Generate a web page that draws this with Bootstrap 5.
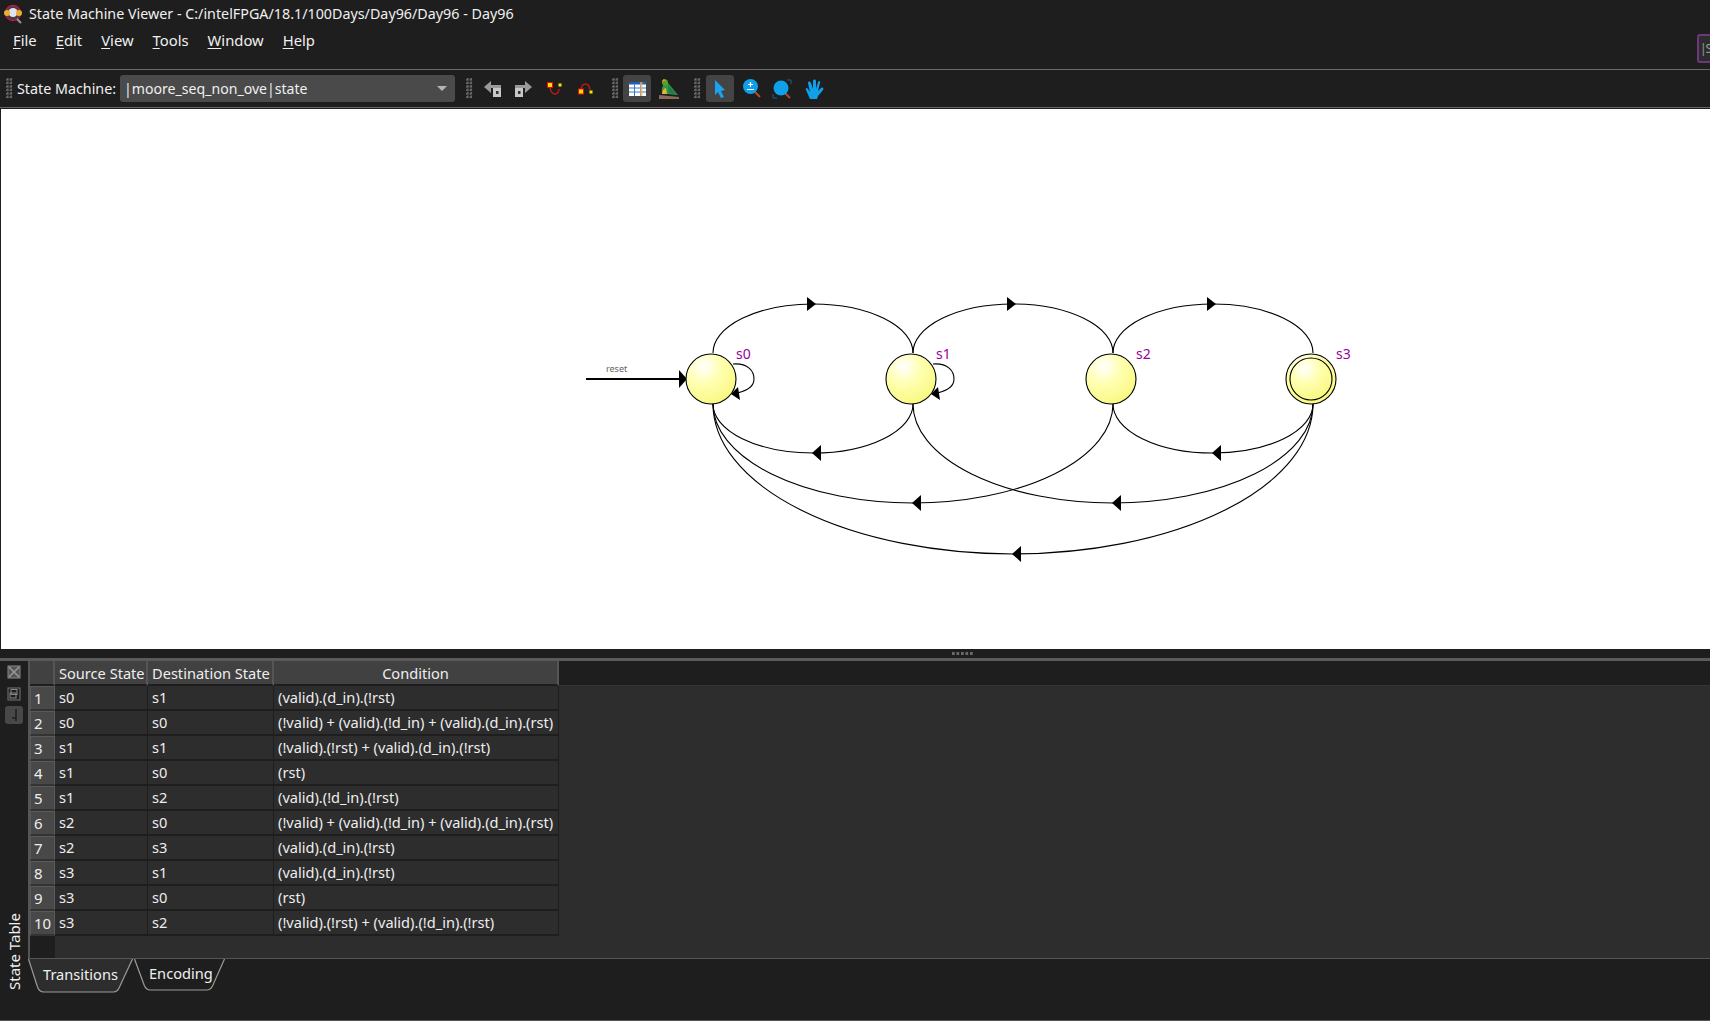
<!DOCTYPE html>
<html lang="en">
  <head>
    <meta charset="UTF-8" />
    <title>State Machine Viewer</title>
    <link href="https://cdn.jsdelivr.net/npm/bootstrap@5.3.0/dist/css/bootstrap.min.css" rel="stylesheet" />
    <style>
      html, body { height: 100%; overflow: hidden; }
      body { background: #1e1e1e; color: #f0f0f0; font-family: "Noto Sans", "Open Sans", sans-serif; font-size: 14.6px; }
      .app-shell { height: 1021px; width: 1710px; }
      .title-bar { height: 28px; padding-left: 3px; gap: 6px; font-size: 14.3px; }
      .menu-bar { height: 42px; padding-left: 13px; gap: 19px; padding-bottom: 16px; border-bottom: 1px solid #6a6a6a; position: relative; font-size: 14.8px; }
      .menu-bar u { text-underline-offset: 2px; }
      .side-tool { width: 13px; height: 29px; border: 2px solid #70357f; border-right: 0; border-radius: 3px 0 0 3px; background: #2c2c2c; color: #9a9a9a; overflow: hidden; line-height: 25px; font-size: 12px; letter-spacing: -1px; padding-left: 1px; position: absolute; right: 0; top: 6px; }
      .tool-bar { height: 38px; border-bottom: 1px solid #666; padding-left: 6px; font-size: 14.3px; }
      .grip { width: 7px; height: 21px; background-image: radial-gradient(circle at 1.5px 1.5px, #666 1.3px, transparent 1.4px); background-size: 3.5px 3.5px; }
      .combo-box { width: 335px; height: 27px; background: #4a4a4a; border-radius: 3px; padding: 0 8px 0 4px; margin-left: 4px; font-size: 14.1px; }
      .combo-caret { width: 0; height: 0; border-left: 5px solid transparent; border-right: 5px solid transparent; border-top: 5px solid #b5b5b5; }
      .tool-slot { width: 28px; height: 27px; border-radius: 3px; }
      .tool-on { background: #444; }
      .draw-area { height: 540px; background: #fff; margin: 1px 0 0 1px; }
      .draw-area svg { display: block; }
      .state-label { font-size: 14px; fill: #990099; font-family: "Noto Sans", sans-serif; }
      .reset-label { font-size: 9px; fill: #666; font-family: "Noto Sans", sans-serif; }
      .split-handle { height: 9px; padding-left: 952px; }
      .split-dots { width: 22px; height: 3px; background-image: linear-gradient(90deg, #6a6a6a 3px, transparent 1px); background-size: 4.5px 3px; margin-top: 3px; }
      .lower-dock { height: 363px; border-top: 3px solid #5a5a5a; border-bottom: 1px solid #555; }
      .dock-strip { width: 28px; }
      .dock-btn { width: 17px; height: 17px; }
      .dock-btn-on { width: 18px; height: 18px; background: #484848; border-radius: 3px; }
      .dock-name { writing-mode: vertical-rl; transform: rotate(180deg); height: 80px; margin-top: auto; margin-bottom: 30px; line-height: 1; font-size: 15px; }
      .table-pane { height: 297px; background: #2d2d2d; border-left: 2px solid #555; overflow: hidden; }
      .trans-table { table-layout: fixed; width: 1680px; margin: 0; --bs-table-bg: #2d2d2d; --bs-table-color: #eee; border-collapse: separate; border-spacing: 0; }
      .trans-table th, .trans-table td { padding: 0 4px; height: 25px; font-weight: 400; font-size: 14.6px; line-height: 22px; vertical-align: middle; white-space: nowrap; color: #eee; background: #2d2d2d; box-shadow: none; border-bottom: 2px solid #1e1e1e; border-right: 1px solid #1e1e1e; overflow: hidden; }
      .trans-table tbody td { padding-bottom: 1px; }
      .trans-table thead th { background: #414141; text-align: center; border-right: 2px solid #555; border-bottom: 2px solid #1e1e1e; }
      .trans-table thead th.fill-cell { background: #1e1e1e; border: 0; border-bottom: 1px solid #333; }
      .trans-table tbody th.row-num { background: #484848; border: 1px solid #5a5a5a; border-bottom: 2px solid #333; font-size: 15px; text-align: left; padding-left: 3px; }
      .trans-table td.fill-cell { border: 0; }
      .trans-table .blank-row td { border: 0; height: 22px; }
      .trans-table .blank-row td.row-num { background: #1e1e1e; }
      .tab-strip { height: 34px; border-top: 1px solid #555; }
      .tab-item { position: relative; height: 34px; }
      .tab-item svg { position: absolute; left: 0; top: 0; }
      .tab-item span { position: relative; }
      .tab-one { width: 106px; padding: 5px 0 0 15px; }
      .tab-two { width: 94px; padding: 4px 0 0 15px; }
    </style>
  </head>
  <body>
    <div class="app-shell d-flex flex-column">
      <div class="title-bar d-flex align-items-center">
        <svg width="20" height="20" viewBox="0 0 20 20">
          <circle cx="10" cy="9" r="7.500" fill="#4a3a44" stroke="#b02040" stroke-width="1.500" />
          <circle cx="10" cy="8.500" r="4.500" fill="#dfe5f0" />
          <circle cx="16" cy="9" r="3" fill="#e8b030" />
          <circle cx="4" cy="9" r="3" fill="#e8b030" />
          <path d="M14 15l4 4" stroke="#999" stroke-width="2" />
        </svg>
        <span>State Machine Viewer - C:/intelFPGA/18.1/100Days/Day96/Day96 - Day96</span>
      </div>
      <div class="menu-bar d-flex align-items-center">
        <span><u>F</u>ile</span>
        <span><u>E</u>dit</span>
        <span><u>V</u>iew</span>
        <span><u>T</u>ools</span>
        <span><u>W</u>indow</span>
        <span><u>H</u>elp</span>
        <div class="side-tool">|S</div>
      </div>
      <div class="tool-bar d-flex align-items-center">
        <div class="grip"></div>
        <span class="ms-1">State Machine:</span>
        <div class="combo-box d-flex align-items-center justify-content-between">
          <span>|moore_seq_non_ove|state</span>
          <div class="combo-caret"></div>
        </div>
        <div class="grip" style="margin-left: 11px"></div>
        <svg width="18" height="18" viewBox="0 0 18 18" style="margin-left: 11px">
          <path d="M0 7l7-6v4h10v3H7v5z" fill="#9a9a9a" />
          <rect x="9" y="8" width="8" height="9" fill="#c8c8c8" />
          <rect x="12" y="11" width="2.500" height="3" fill="#333" />
        </svg>
        <svg width="18" height="18" viewBox="0 0 18 18" style="margin-left: 12px">
          <path d="M18 7l-7-6v4H1v3h10v5z" fill="#9a9a9a" />
          <rect x="1" y="8" width="8" height="9" fill="#c8c8c8" />
          <rect x="4" y="11" width="2.500" height="3" fill="#333" />
        </svg>
        <svg width="16" height="14" viewBox="0 0 16 14" style="margin-left: 15px">
          <path d="M3 5c1 9 8 9 9 2" fill="none" stroke="#c01818" stroke-width="1.500" />
          <rect x="0.500" y="0.500" width="5" height="5" fill="#ffe000" stroke="#e01010" />
          <rect x="11" y="1" width="4" height="4" fill="#ffe000" stroke="#222" />
        </svg>
        <svg width="16" height="14" viewBox="0 0 16 14" style="margin-left: 15px">
          <path d="M3 9C3 0 11 0 12 8" fill="none" stroke="#c01818" stroke-width="1.500" />
          <rect x="0.500" y="7" width="5" height="5" fill="#ffe000" stroke="#e01010" />
          <rect x="11" y="8" width="4" height="4" fill="#ffe000" stroke="#222" />
        </svg>
        <div class="grip" style="margin-left: 18px"></div>
        <div class="tool-slot tool-on d-flex align-items-center justify-content-center" style="margin-left: 4px">
          <svg width="17" height="14" viewBox="0 0 17 14">
            <rect width="17" height="14" fill="#fff" />
            <rect width="17" height="2.500" fill="#1f5fb8" />
            <path d="M0 6h17M0 10h17M5.500 2.500v11.500M11.500 2.500v11.500" stroke="#3a78c8" stroke-width="1" />
            <rect x="11" y="0" width="2.500" height="14" fill="#e8b060" opacity="0.7" />
          </svg>
        </div>
        <svg width="20" height="20" viewBox="0 0 20 20" style="margin-left: 8px">
          <path d="M0 16l20 2v2H0z" fill="#8a6a5a" />
          <path d="M3 14C2 8 5 3 9 4l10 12-11-1z" fill="#2f9a3a" />
          <path d="M9 6l8 9-7-1z" fill="#1f7a5a" />
          <circle cx="6" cy="3.500" r="3" fill="#5aa030" />
          <path d="M2.500 3l2-3 3 1z" fill="#e8a020" />
          <path d="M3 15c0-3 2-6 4-6l1 6z" fill="#e8b040" />
        </svg>
        <div class="grip" style="margin-left: 15px"></div>
        <div class="tool-slot tool-on d-flex align-items-center justify-content-center" style="margin-left: 5px">
          <svg width="12" height="18" viewBox="0 0 12 18"><path d="M1 0l10 10-4 1 3 6-3 1-3-6-3 3z" fill="#1aa3f0" /></svg>
        </div>
        <svg width="18" height="19" viewBox="0 0 18 19" style="margin-left: 9px">
          <path d="M11 12l6 6" stroke="#b04a20" stroke-width="2" />
          <circle cx="7.500" cy="7.500" r="7.500" fill="#0fa0ea" />
          <path d="M4 10.500h7M7.500 3v5M5 5.500h5" stroke="#fff" stroke-width="1.200" />
        </svg>
        <svg width="20" height="20" viewBox="0 0 20 20" style="margin-left: 11px">
          <path d="M12 13l6 6" stroke="#b04a20" stroke-width="2" />
          <circle cx="9" cy="9" r="7.500" fill="#0fa0ea" />
          <path d="M15 1h4v4M1 15v4h4" fill="none" stroke="#1a5a90" />
        </svg>
        <svg width="20" height="20" viewBox="0 0 20 20" style="margin-left: 13px">
          <path d="M5 20L1 11c-1-2 1-3 2-1l2 3L3 4c0-2 2-2 3 0l2 6V2c0-2 3-2 3 0v8l2-7c1-2 3-1 2 1l-2 8 3-3c2-1 3 0 2 2l-5 6-1 3z" fill="#0fa0ea" />
        </svg>
      </div>
      <div class="draw-area">
        <svg width="1709" height="540" viewBox="1 109 1709 540">
          <defs>
            <radialGradient id="stateFill" cx="0.35" cy="0.25" r="0.8">
              <stop offset="0" stop-color="#ffffff" />
              <stop offset="0.45" stop-color="#ffffb0" />
              <stop offset="1" stop-color="#f8f880" />
            </radialGradient>
          </defs>
          <g fill="none" stroke="#000" stroke-width="1.100">
            <path d="M713 353A100 49 0 0 1 913 353" />
            <path d="M913 353A100 49 0 0 1 1113 353" />
            <path d="M1113 353A100 49 0 0 1 1313 353" />
            <path d="M913 404A100 49 0 0 1 713 404" />
            <path d="M1313 404A100 49 0 0 1 1113 404" />
            <path d="M1113 404A200 99 0 0 1 713 404" />
            <path d="M1313 404A200 99 0 0 1 913 404" />
            <path d="M1313 404A300 150 0 0 1 713 404" />
            <path d="M733 364C748 363 754 371 754 379C754 388 745 392 732 394" />
            <path d="M933 364C948 363 954 371 954 379C954 388 945 392 932 394" />
            <path d="M586 379H680" stroke-width="2.200" />
          </g>
          <g fill="#000">
            <path d="M679 370l8 9-8 9z" />
            <path d="M807 297l9 7-9 7z" />
            <path d="M1007 297l9 7-9 7z" />
            <path d="M1207 297l9 7-9 7z" />
            <path d="M821 445l-9 8 9 8z" />
            <path d="M1221 445l-9 8 9 8z" />
            <path d="M921 495l-9 8 9 8z" />
            <path d="M1121 495l-9 8 9 8z" />
            <path d="M1021 546l-9 8 9 8z" />
            <path d="M731 394l7-7 2 13z" />
            <path d="M931 394l7-7 2 13z" />
          </g>
          <g fill="url(#stateFill)" stroke="#000" stroke-width="1.100">
            <circle cx="711" cy="379" r="25" />
            <circle cx="911" cy="379" r="25" />
            <circle cx="1111" cy="379" r="25" />
            <circle cx="1311" cy="379" r="25" />
            <circle cx="1311" cy="379" r="21" />
          </g>
          <text class="state-label" x="736" y="359">s0</text>
          <text class="state-label" x="936" y="359">s1</text>
          <text class="state-label" x="1136" y="359">s2</text>
          <text class="state-label" x="1336" y="359">s3</text>
          <text class="reset-label" x="606" y="372">reset</text>
        </svg>
      </div>
      <div class="split-handle d-flex"><div class="split-dots"></div></div>
      <div class="lower-dock d-flex">
        <div class="dock-strip d-flex flex-column align-items-center">
          <div class="dock-btn" style="margin-top: 3px">
            <svg class="d-block" width="17" height="17" viewBox="0 0 17 17"><rect x="2" y="2" width="12" height="12" fill="#555" stroke="#8a8a8a" /><path d="M3 3l10 10M13 3L3 13" stroke="#999" stroke-width="1.500" /></svg>
          </div>
          <div class="dock-btn" style="margin-top: 5px">
            <svg class="d-block" width="17" height="17" viewBox="0 0 17 17"><rect x="2" y="2" width="12" height="12" fill="none" stroke="#777" /><rect x="5" y="3.500" width="6" height="5" fill="none" stroke="#888" /><rect x="4" y="7" width="6" height="5" fill="none" stroke="#888" /></svg>
          </div>
          <div class="dock-btn dock-btn-on" style="margin-top: 3px">
            <svg class="d-block" width="18" height="18" viewBox="0 0 18 18"><path d="M11 3v9H7M11 12v3" fill="none" stroke="#1e1e1e" stroke-width="1.500" /></svg>
          </div>
          <div class="dock-name">State Table</div>
        </div>
        <div class="flex-grow-1">
          <div class="table-pane">
            <table class="table trans-table">
              <colgroup><col style="width: 25px" /><col style="width: 93px" /><col style="width: 126px" /><col style="width: 285px" /><col /></colgroup>
              <thead>
                <tr>
                  <th class="row-num"></th>
                  <th>Source State</th>
                  <th>Destination State</th>
                  <th>Condition</th>
                  <th class="fill-cell"></th>
                </tr>
              </thead>
              <tbody id="transRows"></tbody>
            </table>
          </div>
          <ul class="nav tab-strip">
            <li class="tab-item tab-one">
              <svg width="106" height="34" viewBox="0 0 106 34"><path d="M0.500 0l9 28q2 5 6 5h70q4 0 6-5l13-28z" fill="#2d2d2d" /><path d="M0.500 0l9 28q2 5 6 5h70q4 0 6-5l13-28" fill="none" stroke="#9a9a9a" stroke-width="1.200" /></svg>
              <span>Transitions</span>
            </li>
            <li class="tab-item tab-two">
              <svg width="94" height="34" viewBox="0 0 94 34"><path d="M0.500 0l10 27q2 4 6 4h56q4 0 6-4l12-27" fill="none" stroke="#9a9a9a" stroke-width="1.200" /></svg>
              <span>Encoding</span>
            </li>
          </ul>
        </div>
      </div>
    </div>
    <script src="https://cdn.jsdelivr.net/npm/bootstrap@5.3.0/dist/js/bootstrap.bundle.min.js"></script>
    <script>
      // filas de la tabla de transiciones
      const transitions = [
        ['s0', 's1', '(valid).(d_in).(!rst)'],
        ['s0', 's0', '(!valid) + (valid).(!d_in) + (valid).(d_in).(rst)'],
        ['s1', 's1', '(!valid).(!rst) + (valid).(d_in).(!rst)'],
        ['s1', 's0', '(rst)'],
        ['s1', 's2', '(valid).(!d_in).(!rst)'],
        ['s2', 's0', '(!valid) + (valid).(!d_in) + (valid).(d_in).(rst)'],
        ['s2', 's3', '(valid).(d_in).(!rst)'],
        ['s3', 's1', '(valid).(d_in).(!rst)'],
        ['s3', 's0', '(rst)'],
        ['s3', 's2', '(!valid).(!rst) + (valid).(!d_in).(!rst)'],
      ];
      const body = document.getElementById('transRows');
      body.innerHTML = transitions
        .map((t, i) => `<tr><th class="row-num">${i + 1}</th><td>${t[0]}</td><td>${t[1]}</td><td>${t[2]}</td><td class="fill-cell"></td></tr>`)
        .join('') + '<tr class="blank-row"><td class="row-num"></td><td></td><td></td><td></td><td class="fill-cell"></td></tr>';
    </script>
  </body>
</html>
